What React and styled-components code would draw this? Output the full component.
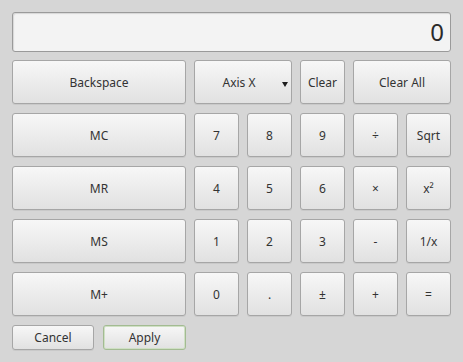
import styled, { createGlobalStyle } from "styled-components";

const GlobalStyle = createGlobalStyle`
  html, body {
    margin: 0;
    padding: 0;
    background: #d6d6d6;
  }
  body {
    font-family: "Noto Sans", "Open Sans", sans-serif;
    color: #303030;
  }
`;

const Window = styled.div`
  width: 463px;
  height: 362px;
  box-sizing: border-box;
  padding: 12px 12px 0 12px;
  display: flex;
  flex-direction: column;
  background: #d6d6d6;
`;

const Display = styled.div`
  height: 40px;
  box-sizing: border-box;
  border: 1px solid #9a9a9a;
  border-radius: 3px;
  background: #f3f3f3;
  box-shadow: inset 1px 1px 1px rgba(0, 0, 0, 0.12);
  display: flex;
  align-items: center;
  justify-content: flex-end;
  padding: 0 6px 1px 0;
  font-size: 24px;
  color: #2a2a2a;
`;

const Pad = styled.div`
  margin-top: 8px;
  display: grid;
  grid-template-columns: 174px repeat(5, 1fr);
  grid-auto-rows: 44px;
  column-gap: 8px;
  row-gap: 9px;
`;

const Key = styled.button`
  grid-column: span ${(p) => p.$span || 1};
  position: relative;
  margin: 0;
  padding: 0;
  box-sizing: border-box;
  border: 1px solid ${(p) => (p.$focus ? "#a3bb92" : "#a6a6a6")};
  border-radius: 3px;
  background: linear-gradient(#f7f7f7, #e1e1e1);
  box-shadow: ${(p) =>
    p.$focus ? "inset 0 0 0 1px #cfe0c4" : "0 1px 0 rgba(0,0,0,0.06)"};
  font-family: "Noto Sans", "Open Sans", sans-serif;
  font-size: 12px;
  color: #333;
  display: flex;
  align-items: center;
  justify-content: center;
  padding-right: ${(p) => (p.$menu ? "8px" : "0")};
`;

const Arrow = styled.span`
  position: absolute;
  right: 3px;
  top: 21px;
  width: 0;
  height: 0;
  border-left: 3.5px solid transparent;
  border-right: 3.5px solid transparent;
  border-top: 5px solid #1e1e1e;
`;

const Footer = styled.div`
  margin-top: 9px;
  display: flex;
  gap: 9px;
`;

const FooterKey = styled(Key)`
  width: ${(p) => p.$w}px;
  height: 25px;
`;

const rows = [
  ["MC", "7", "8", "9", "÷", "Sqrt"],
  ["MR", "4", "5", "6", "×", "x²"],
  ["MS", "1", "2", "3", "-", "1/x"],
  ["M+", "0", ".", "±", "+", "="],
];

export default function App() {
  return (
    <>
      <GlobalStyle />
      <Window>
        <Display>0</Display>
        <Pad>
          <Key>Backspace</Key>
          <Key $span={2} $menu>
            Axis X
            <Arrow />
          </Key>
          <Key>Clear</Key>
          <Key $span={2}>Clear All</Key>
          {rows.flat().map((label, i) => (
            <Key key={i}>{label}</Key>
          ))}
        </Pad>
        <Footer>
          <FooterKey $w={82}>Cancel</FooterKey>
          <FooterKey $w={83} $focus>
            Apply
          </FooterKey>
        </Footer>
      </Window>
    </>
  );
}
